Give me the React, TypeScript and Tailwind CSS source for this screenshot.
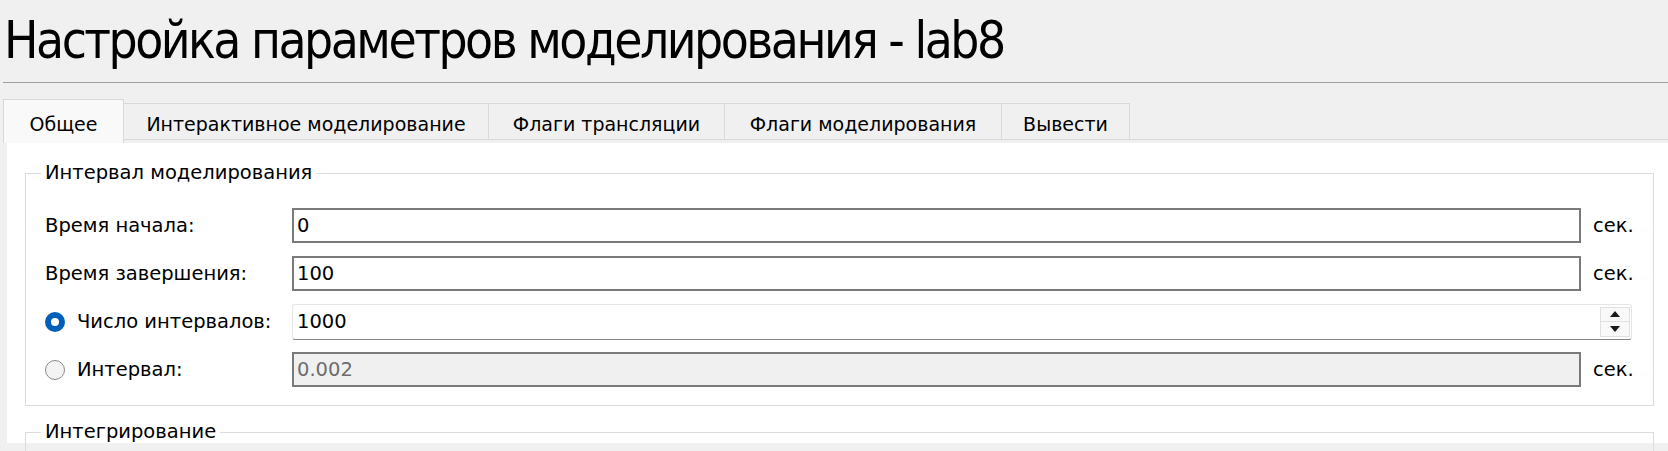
import type { ReactNode } from "react";

// ширины вкладок подобраны по скриншоту
const tabs = [
  { title: "Общее", w: "w-[121px]" },
  { title: "Интерактивное моделирование", w: "w-[365px]" },
  { title: "Флаги трансляции", w: "w-[236px]" },
  { title: "Флаги моделирования", w: "w-[277px]" },
  { title: "Вывести", w: "w-[128px]" },
];

function Radio({ checked }: { checked?: boolean }) {
  if (checked) {
    return (
      <span className="flex h-[20px] w-[20px] shrink-0 items-center justify-center rounded-full bg-[#005fb8]">
        <span className="block h-[8px] w-[8px] rounded-full bg-white" />
      </span>
    );
  }
  return (
    <span className="block h-[20px] w-[20px] shrink-0 rounded-full border border-[#8a8a8a] bg-[#f3f3f3]" />
  );
}

function Row({ label, children }: { label: ReactNode; children: ReactNode }) {
  return (
    <div className="flex h-[35px] items-center">
      <div className="flex w-[247px] shrink-0 items-center">{label}</div>
      {children}
    </div>
  );
}

function TextBox({ value, disabled }: { value: string; disabled?: boolean }) {
  return (
    <>
      <div
        className={`flex h-[35px] w-[1289px] items-center border-2 border-[#7a7a7a] pl-[3px] ${
          disabled ? "bg-[#f0f0f0] text-[#6d6d6d]" : "bg-white"
        }`}
      >
        {value}
      </div>
      <span className="ml-[12px]">сек.</span>
    </>
  );
}

function SpinBox({ value }: { value: string }) {
  return (
    <div className="flex h-[36px] w-[1340px] items-center rounded-[3px] border border-b-[#868686] border-[#e5e5e5] bg-white pl-[4px] pr-px">
      <span className="flex-1">{value}</span>
      <div className="flex h-[30px] w-[30px] flex-col border border-[#e0e0e0] bg-[#f9f9f9]">
        <div className="flex flex-1 items-center justify-center border-b border-[#e0e0e0]">
          <svg width="10" height="6" viewBox="0 0 10 6">
            <path d="M0 6 L5 0 L10 6 Z" fill="#1a1a1a" />
          </svg>
        </div>
        <div className="flex flex-1 items-center justify-center">
          <svg width="10" height="6" viewBox="0 0 10 6">
            <path d="M0 0 L5 6 L10 0 Z" fill="#1a1a1a" />
          </svg>
        </div>
      </div>
    </div>
  );
}

function RadioLabel({ checked, text }: { checked?: boolean; text: string }) {
  return (
    <>
      <Radio checked={checked} />
      <span className="ml-[12px]">{text}</span>
    </>
  );
}

export default function App() {
  return (
    <div className="h-[451px] w-[1668px] overflow-hidden bg-[#f0f0f0] font-['DejaVu_Sans',sans-serif] text-black">
      <div className="h-[82px] whitespace-nowrap pl-[4px] pt-[11px] text-[51px] leading-[60px] tracking-[-2.5px] font-stretch-condensed">
        Настройка параметров моделирования - lab8
      </div>
      <div className="ml-[3px] h-px bg-[#a0a0a0]" />

      <div className="mt-[16px] flex h-[44px] items-start pl-[3px] text-[19px]">
        {tabs.map((t, i) =>
          i === 0 ? (
            <div
              key={t.title}
              className={`flex h-[44px] ${t.w} items-start justify-center border border-b-0 border-[#d9d9d9] bg-[#f9f9f9] pt-[10px]`}
            >
              {t.title}
            </div>
          ) : (
            <div
              key={t.title}
              className={`mt-[4px] flex h-[37px] ${t.w} items-start justify-center border-y border-r border-[#d9d9d9] pt-[6px]`}
            >
              {t.title}
            </div>
          ),
        )}
        <div className="mt-[4px] h-[37px] flex-1 border-b border-[#d9d9d9]" />
      </div>

      <div className="ml-[7px] h-[300px] bg-white pl-[18px] pr-[14px] pt-[18px] text-[19.5px]">
        <fieldset className="border border-[#dcdcdc] pb-[18px] pl-[19px] pt-[23px]">
          <legend className="ml-[-4px] px-[4px] leading-[24px]">Интервал моделирования</legend>
          <div className="flex flex-col gap-[13px]">
            <Row label="Время начала:">
              <TextBox value="0" />
            </Row>
            <Row label="Время завершения:">
              <TextBox value="100" />
            </Row>
            <Row label={<RadioLabel checked text="Число интервалов:" />}>
              <SpinBox value="1000" />
            </Row>
            <Row label={<RadioLabel text="Интервал:" />}>
              <TextBox value="0.002" disabled />
            </Row>
          </div>
        </fieldset>

        <fieldset className="mt-[14px] h-[100px] border border-[#dcdcdc] pl-[19px]">
          <legend className="ml-[-4px] px-[4px] leading-[24px]">Интегрирование</legend>
        </fieldset>
      </div>
    </div>
  );
}
